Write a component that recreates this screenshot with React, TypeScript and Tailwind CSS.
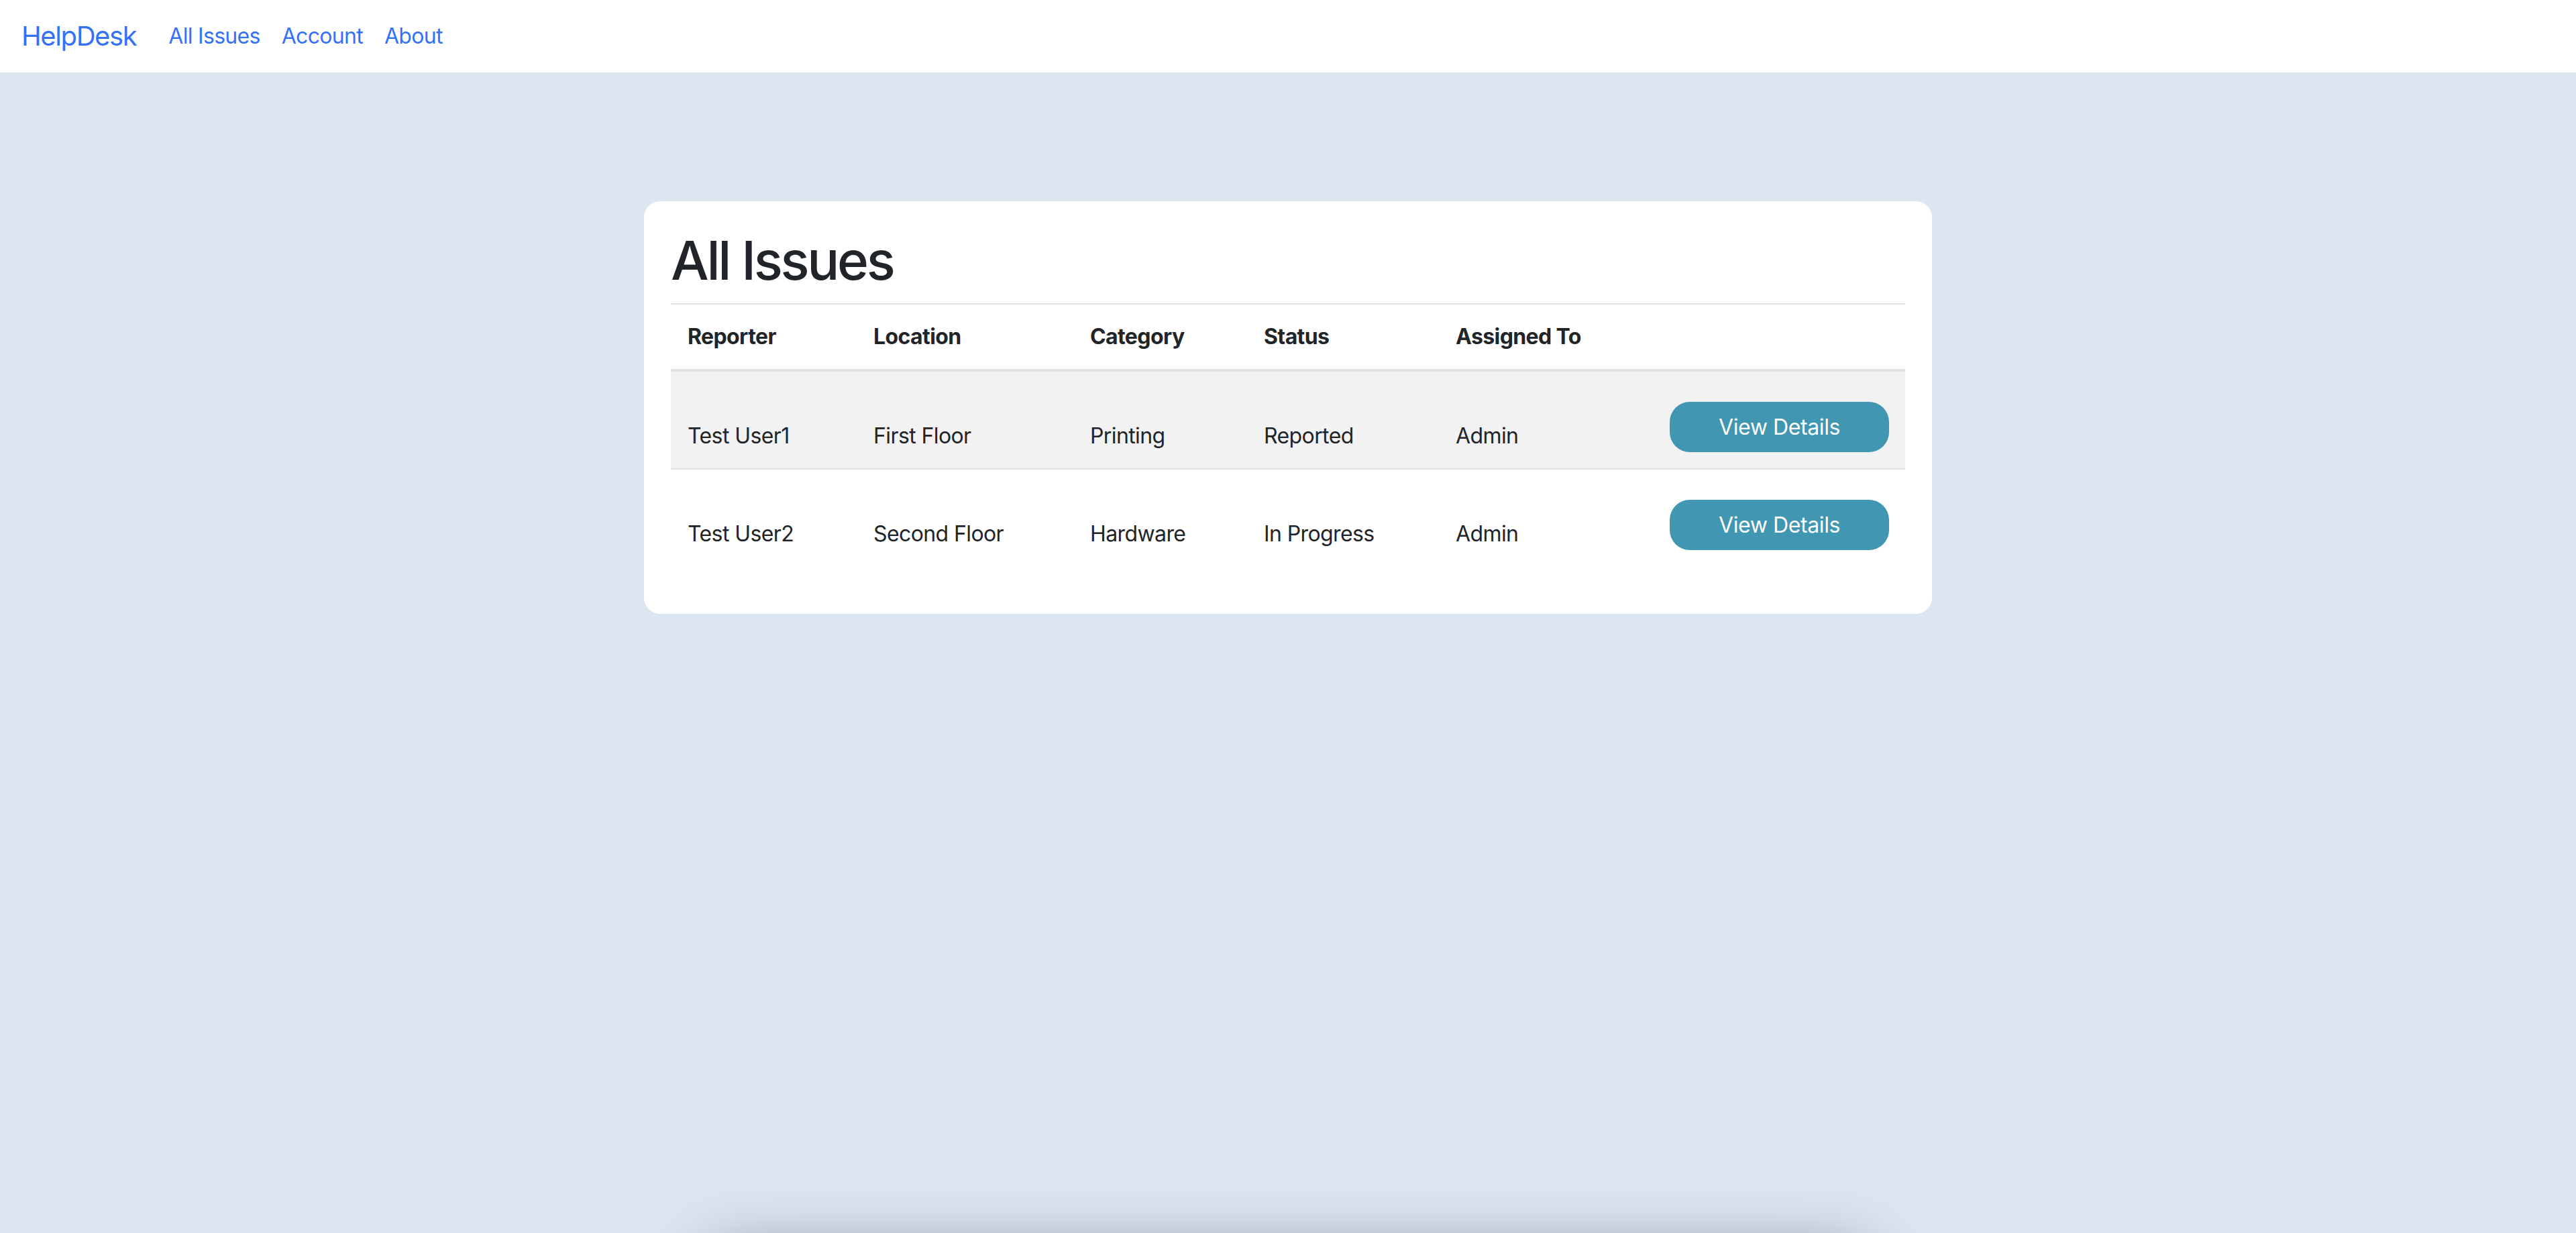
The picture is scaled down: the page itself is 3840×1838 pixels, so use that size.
import React from "react";

const rows = [
  { reporter: "Test User1", location: "First Floor", category: "Printing", status: "Reported", assigned: "Admin" },
  { reporter: "Test User2", location: "Second Floor", category: "Hardware", status: "In Progress", assigned: "Admin" },
];

const cols = "grid grid-cols-[277px_323px_259px_286px_320px_1fr]";

export default function App() {
  return (
    <div
      className="flex h-[1838px] flex-col overflow-hidden bg-[#dbe6f1] text-[#212529]"
      style={{ fontFamily: 'Inter, "Noto Sans", sans-serif' }}
    >
      <nav className="flex h-[108px] shrink-0 items-center bg-white px-[32px]">
        <a className="mr-[32px] text-[40px] leading-none tracking-[-1.4px] text-[#3571f6]" href="#">
          HelpDesk
        </a>
        <div className="flex items-center">
          {["All Issues", "Account", "About"].map((l) => (
            <a key={l} href="#" className="px-[16px] text-[32px] leading-none tracking-[-0.7px] text-[#3571f6]">
              {l}
            </a>
          ))}
        </div>
      </nav>

      <main className="flex min-h-0 flex-1 flex-col items-center">
        <section className="mt-[192px] w-[1920px] shrink-0 rounded-[24px] bg-white px-[40px] pt-[40px] pb-[71px]">
          <h1 className="mb-[16px] text-[80px] leading-[96px] font-medium tracking-[-3.3px] text-[#212529]">
            All Issues
          </h1>
          <div className="border-t-2 border-[#dee2e6]">
            <div className={`${cols} h-[100px] items-center border-b-4 border-[#dee2e6] text-[32px] font-bold tracking-[-0.6px]`}>
              <div className="px-[25px]">Reporter</div>
              <div className="px-[25px]">Location</div>
              <div className="px-[25px]">Category</div>
              <div className="px-[25px]">Status</div>
              <div className="px-[25px]">Assigned To</div>
              <div />
            </div>
            {rows.map((r, i) => (
              <div
                key={r.reporter}
                className={`${cols} items-end pb-[24px] text-[32px] leading-[48px] tracking-[-0.6px] ${
                  i === 0 ? "h-[146px] border-b-2 border-[#dee2e6] bg-[#f2f2f2]" : "h-[144px] bg-white"
                }`}
              >
                <div className="px-[25px]">{r.reporter}</div>
                <div className="px-[25px]">{r.location}</div>
                <div className="px-[25px]">{r.category}</div>
                <div className="px-[25px]">{r.status}</div>
                <div className="px-[25px]">{r.assigned}</div>
                <div className="flex justify-end pr-[24px]">
                  <button className="flex h-[75px] w-[327px] items-center justify-center rounded-[30px] bg-[#4196b1] text-[32px] leading-none tracking-[-0.4px] text-white">
                    View Details
                  </button>
                </div>
              </div>
            ))}
          </div>
        </section>
        <div className="mt-auto mb-[-338px] h-[300px] w-[1720px] shrink-0 rounded-[24px] bg-white shadow-[0_0_100px_rgba(0,0,0,0.5)]" />
      </main>
    </div>
  );
}
